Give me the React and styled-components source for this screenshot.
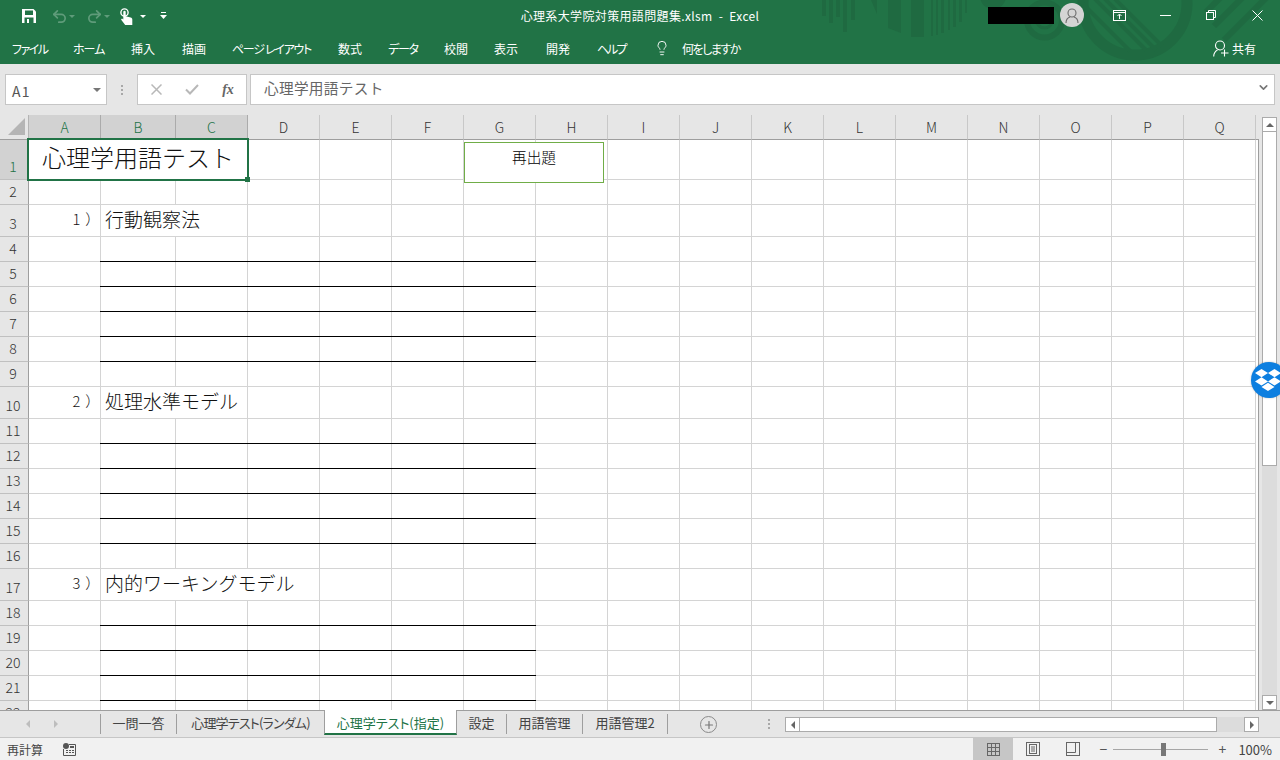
import React from "react";
import styled, { createGlobalStyle, css } from "styled-components";
import { Undo2, Redo2, Lightbulb, Plus, ChevronDown } from "lucide-react";
import { FaDropbox } from "react-icons/fa";

const FONT = `"Noto Sans CJK JP", "Noto Sans", sans-serif`;
const GREEN = "#217346";
const Global = createGlobalStyle`
  html, body { margin: 0; padding: 0; background: #e6e6e6; }
  body { font-family: ${FONT}; text-spacing-trim: space-all; }
  * { box-sizing: border-box; }
`;

const Window = styled.div`
  position: relative; width: 1280px; height: 760px; overflow: hidden;
  display: flex; flex-direction: column; background: #e6e6e6;
`;

/* ---------- header ---------- */
const Header = styled.header`
  position: relative; height: 64px; flex: none; background: ${GREEN}; color: #fff;
  font-feature-settings: "palt";
`;
const Pattern = styled.svg`position: absolute; inset: 0; width: 1280px; height: 64px;`;
const TitleBar = styled.div`
  position: relative; height: 32px; display: grid; grid-template-columns: 1fr auto 1fr; align-items: center;
`;
const Qat = styled.div`display: flex; align-items: center; padding-left: 22px; height: 32px;`;
const QatSlot = styled.span`
  display: flex; align-items: center; justify-content: center; flex: none;
  width: ${p => p.$w}px; margin-left: ${p => p.$ml || 0}px;
`;
const Title = styled.div`font-size: 12px; line-height: 32px; white-space: pre; letter-spacing: 0.36px;`;
const WinControls = styled.div`display: flex; align-items: center; justify-content: flex-end; height: 32px;`;
const Redacted = styled.div`width: 66px; height: 17px; background: #000; margin-right: 6px; margin-top: -1px;`;
const Avatar = styled.div`
  width: 24px; height: 24px; border-radius: 50%; background: #d4d4d4; margin-right: 12px; margin-top: -2px;
  display: flex; align-items: center; justify-content: center;
`;
const WinBtn = styled.div`
  width: 46px; height: 32px; display: flex; align-items: center; justify-content: center; margin-top: -2px;
`;
const RibbonTabs = styled.nav`
  position: relative; height: 32px; display: flex; align-items: center; padding-left: 12px; font-size: 12px;
`;
const RibbonTab = styled.span`
  flex: none; width: ${p => p.$w}px; white-space: nowrap; letter-spacing: ${p => p.$ls || 0}px;
`;
const Tell = styled.span`flex: none; display: flex; align-items: center; gap: 12px; margin-left: -7px; letter-spacing: -1.5px;`;
const Share = styled.span`
  margin-left: auto; margin-right: 24px; display: flex; align-items: center; gap: 3px;
`;

/* ---------- formula bar ---------- */
const FormulaBar = styled.div`
  height: 51px; flex: none; display: flex; align-items: flex-start; padding: 10px 5px 0; background: #e6e6e6;
`;
const NameBox = styled.div`
  width: 102px; height: 31px; background: #fff; border: 1px solid #c6c6c6; display: flex; align-items: center;
  justify-content: space-between; padding: 2px 5px 0 6px; font-size: 14px; color: #555; letter-spacing: 1.2px;
`;
const Caret = styled.span`
  width: 0; height: 0; border-left: 4px solid transparent; border-right: 4px solid transparent;
  border-top: 4px solid ${p => p.$c || "#777"}; margin-bottom: 2px;
`;
const Grip = styled.div`
  width: 30px; height: 31px; display: flex; flex-direction: column; align-items: center; justify-content: center; gap: 2px;
`;
const GripDot = styled.i`display: block; width: 2px; height: 2px; background: #a8a8a8;`;
const FxBox = styled.div`
  width: 110px; height: 31px; background: #fff; border: 1px solid #c6c6c6; display: flex; align-items: center;
  margin-right: 3px;
`;
const FxSlot = styled.span`
  width: 37px; display: flex; justify-content: center; align-items: center;
`;
const FxText = styled.span`
  font-family: "Liberation Serif", serif; font-style: italic; font-weight: 700; font-size: 14px; color: #666;
`;
const FormulaInput = styled.div`
  flex: 1; height: 31px; background: #fff; border: 1px solid #c6c6c6; display: flex; align-items: center;
  justify-content: space-between; padding: 0 4px 4px 13px; font-size: 14.67px; color: #666; letter-spacing: 0.3px;
`;

/* ---------- sheet ---------- */
const SheetRow = styled.div`height: 595px; flex: none; display: flex;`;
const SheetArea = styled.div`
  position: relative; width: 1259px; height: 595px; overflow: hidden; flex: none;
`;
const COLS = ["A","B","C","D","E","F","G","H","I","J","K","L","M","N","O","P","Q"];
const ROWS = [[1,40],[2,25],[3,32],[4,25],[5,25],[6,25],[7,25],[8,25],[9,25],[10,32],[11,25],[12,25],[13,25],[14,25],[15,25],[16,25],[17,32],[18,25],[19,25],[20,25],[21,25],[22,25]];
const Grid = styled.div`
  display: grid;
  grid-template-columns: 29px 72px 75px repeat(15, 72px) 3px;
  grid-template-rows: 25px ${ROWS.map(r => r[1] + "px").join(" ")};
`;
const Corner = styled.div`
  background: #e6e6e6; border-right: 1px solid #b4b4b4; border-bottom: 1px solid #9e9e9e;
  display: flex; align-items: flex-end; justify-content: flex-end; padding: 0 3px 4px 0;
`;
const CornerMark = styled.span`
  width: 0; height: 0; border-left: 17px solid transparent; border-bottom: 17px solid #b5b5b5;
`;
const ColHead = styled.div`
  background: ${p => (p.$sel ? "#d2d2d2" : "#e6e6e6")}; color: ${p => (p.$sel ? GREEN : "#333")};
  border-right: 1px solid ${p => (p.$sel ? "#ababab" : "#c8c8c8")}; border-bottom: 1px solid #9e9e9e;
  font-size: 14px; font-weight: 300; display: flex; align-items: center; justify-content: center; padding-bottom: 1px;
`;
const HeadEnd = styled.div`background: #e6e6e6; border-bottom: 1px solid #9e9e9e;`;
const RowHead = styled.div`
  background: ${p => (p.$sel ? "#d2d2d2" : "#e6e6e6")}; color: ${p => (p.$sel ? GREEN : "#333")};
  border-right: 1px solid #9e9e9e; border-bottom: 1px solid #c0c0c0;
  font-size: 14px; font-weight: 300; line-height: 24px; text-align: center; padding: 0 2px 1px 0;
  display: flex; align-items: flex-end; justify-content: center;
`;
const Cell = styled.div`
  position: relative; background: #fff; white-space: nowrap; color: #111;
  border-right: 1px solid #d4d4d4; border-bottom: 1px solid #d4d4d4;
  grid-column: span ${p => p.$span || 1};
  ${p => p.$rule && css`
    &::after {
      content: ""; position: absolute; left: -1px; right: -1px; bottom: -1px; height: 1px; background: #000;
    }
  `}
`;
const SheetTitle = styled(Cell)`
  display: flex; align-items: center; justify-content: center; font-size: 24px; font-weight: 300; padding-bottom: 6px;
`;
const NumCell = styled(Cell)`
  display: flex; align-items: center; justify-content: flex-end; font-size: 14.67px; font-weight: 300; padding-bottom: 4px;
`;
const NumText = styled.span`letter-spacing: 5px; margin-right: -5px;`;
const TextCell = styled(Cell)`
  display: flex; align-items: center; padding: 0 0 4px 4px; font-size: 19px; font-weight: 300;
`;
const CellEnd = styled.div`background: #fff; border-right: 1px solid #9e9e9e;`;
const Selection = styled.div`
  position: absolute; left: 27px; top: 23px; width: 222px; height: 43px; border: 2px solid ${GREEN};
`;
const FillHandle = styled.div`
  position: absolute; left: 245px; top: 62px; width: 5px; height: 5px; background: ${GREEN};
`;
const MacroButton = styled.div`
  position: absolute; left: 464px; top: 27px; width: 140px; height: 41px; background: #fff; border: 1px solid #70ad47;
  text-align: center; font-size: 14.67px; font-weight: 300; line-height: 20px; padding-top: 4px; color: #000;
`;

const VScroll = styled.div`
  width: 21px; flex: none; padding: 2px 3px 0; display: flex; flex-direction: column; background: #e6e6e6;
`;
const VTrack = styled.div`flex: 1; background: #dcdcdc;`;
const ScrollBtn = styled.div`
  flex: none; background: #fff; border: 1px solid #ababab; display: flex; align-items: center; justify-content: center;
  width: ${p => p.$w}px; height: ${p => p.$h}px;
`;
const Thumb = styled.div`
  flex: none; background: #fff; border: 1px solid #ababab; border-top: none;
  width: ${p => p.$w}px; height: ${p => p.$h}px;
`;
const ArrowUp = styled.span`
  width: 0; height: 0; border-left: 4px solid transparent; border-right: 4px solid transparent; border-bottom: 4px solid #666;
`;
const ArrowDown = styled.span`
  width: 0; height: 0; border-left: 4px solid transparent; border-right: 4px solid transparent; border-top: 4px solid #666;
`;
const ArrowSide = styled.span`
  width: 0; height: 0; border-top: 4px solid transparent; border-bottom: 4px solid transparent;
  ${p => p.$dir === "left"
    ? css`border-right: 4px solid ${p.$c || "#666"};`
    : css`border-left: 4px solid ${p.$c || "#666"};`}
`;
const Badge = styled.div`
  position: absolute; left: 1251px; top: 362px; width: 36px; height: 36px; border-radius: 50%; background: #0d7fe0;
  color: #fff; display: flex; align-items: center; justify-content: center; padding-right: 3px;
  box-shadow: 0 0 2px rgba(0,0,0,.25);
`;

/* ---------- tab strip ---------- */
const TabStrip = styled.div`
  height: 28px; flex: none; display: flex; align-items: flex-start; background: #e6e6e6; border-top: 1px solid #9e9e9e;
  border-bottom: 1px solid #c6c6c6; font-feature-settings: "palt"; font-size: 13px;
`;
const TabNav = styled.div`
  width: 100px; height: 26px; display: flex; align-items: center; padding-left: 26px; gap: 24px; flex: none;
`;
const Tab = styled.div`
  flex: none; width: ${p => p.$w}px; text-align: center; white-space: nowrap; color: #444;
  height: 20px; line-height: 18px; margin-top: 3px; letter-spacing: ${p => p.$ls || 0}px;
  border-left: ${p => (p.$bare ? "none" : "1px solid #9e9e9e")};
`;
const ActiveTab = styled.div`
  flex: none; width: ${p => p.$w}px; text-align: center; white-space: nowrap; color: ${GREEN};
  height: 25px; margin-top: -1px; padding-top: 4px; line-height: 18px; background: #fff;
  border-left: 1px solid #9e9e9e; border-right: 1px solid #9e9e9e; border-bottom: 2px solid ${GREEN};
`;
const TabEnd = styled.div`
  flex: none; width: 33px; height: 20px; margin-top: 3px; border-left: 1px solid #9e9e9e;
`;
const AddTab = styled.div`
  flex: none; width: 17px; height: 17px; margin-top: 5px; border-radius: 50%; border: 1px solid #8a8a8a; color: #777;
  display: flex; align-items: center; justify-content: center;
`;
const TabGrip = styled.div`
  flex: none; width: 2px; margin: 8px 0 0 51px; display: flex; flex-direction: column; gap: 2px;
`;
const HScroll = styled.div`
  flex: none; margin: 6px 0 0 15px; width: 474px; height: 15px; display: flex; background: #dcdcdc;
`;
const HThumb = styled.div`
  flex: none; width: 417px; height: 15px; background: #fff; border: 1px solid #ababab; border-left: none;
`;
const HTrack = styled.div`flex: 1;`;

/* ---------- status bar ---------- */
const StatusBar = styled.footer`
  height: 22px; flex: none; background: #f1f1f1; display: flex; align-items: center; font-size: 12px; color: #444;
`;
const StatusText = styled.span`margin-left: 7px; width: 56px;`;
const ViewBtn = styled.div`
  width: 40px; height: 22px; display: flex; align-items: center; justify-content: center; flex: none;
  background: ${p => (p.$on ? "#c6c6c6" : "transparent")};
`;
const StatusRight = styled.div`margin-left: auto; display: flex; align-items: center; height: 22px;`;
const ZoomSign = styled.span`
  flex: none; width: ${p => p.$w}px; text-align: center; font-size: 14px; color: #555; line-height: 22px;
`;
const Slider = styled.div`
  position: relative; width: 95px; height: 1px; background: #a6a6a6; flex: none;
`;
const SliderKnob = styled.span`
  position: absolute; left: 48px; top: -6px; width: 5px; height: 13px; background: #777;
`;
const ZoomValue = styled.span`margin: 0 8px 0 2px; font-size: 13px;`;

/* ---------- icons ---------- */
const SaveIcon = () => (
  <svg width="14" height="14" viewBox="0 0 14 14">
    <path fill="#fff" d="M0 0h11.5L14 2.5V14H0z" />
    <rect x="3" y="1.5" width="8" height="4.5" fill={GREEN} />
    <rect x="2.5" y="8.5" width="9" height="5.5" fill={GREEN} />
    <rect x="5" y="10" width="2" height="4" fill="#fff" />
  </svg>
);
const TouchIcon = () => (
  <svg width="13" height="17" viewBox="0 0 13 17">
    <circle cx="4.5" cy="4.5" r="3.6" fill="none" stroke="#fff" strokeWidth="1.4" />
    <path fill="#fff" d="M3.3 4a1.2 1.2 0 0 1 2.4 0v4.2l5 1.3c1 .3 1.6 1 1.6 2V17H5.2L1 11.5l1-1 1.3 1z" />
  </svg>
);
const MiniCaret = ({ c }) => <Caret $c={c} style={{ borderWidth: "3px 3px 0", margin: 0 }} />;
const CustomizeIcon = () => (
  <svg width="7" height="8" viewBox="0 0 7 8"><rect x="1" y="0" width="5" height="1" fill="#fff" /><path d="M0 3h7L3.5 7z" fill="#fff" /></svg>
);
const PersonIcon = () => (
  <svg width="16" height="17" viewBox="0 0 16 17" fill="none" stroke="#6b6b6b" strokeWidth="1.1">
    <circle cx="8" cy="6" r="4" /><path d="M2 16c0-4 2.5-5.5 4-6M14 16c0-4-2.5-5.5-4-6" />
  </svg>
);
const RibbonOptionsIcon = () => (
  <svg width="13" height="11" viewBox="0 0 13 11" fill="none" stroke="#fff">
    <rect x=".5" y=".5" width="12" height="10" /><path d="M.5 2.5h12M6.5 9V4.5M4.5 6l2-2 2 2" />
  </svg>
);
const MinIcon = () => <svg width="11" height="1"><rect width="11" height="1" fill="#fff" /></svg>;
const RestoreIcon = () => (
  <svg width="10" height="10" viewBox="0 0 10 10" fill="none" stroke="#fff">
    <rect x=".5" y="2.5" width="7" height="7" /><path d="M2.5 2.5v-2h7v7h-2" />
  </svg>
);
const CloseIcon = ({ c = "#fff", s = 11, w = 1 }) => (
  <svg width={s} height={s} viewBox="0 0 11 11" fill="none" stroke={c} strokeWidth={w}><path d="M.5.5l10 10M10.5.5l-10 10" /></svg>
);
const CheckIcon = () => (
  <svg width="14" height="11" viewBox="0 0 14 11" fill="none" stroke="#b8b8b8" strokeWidth="2"><path d="M1 5.5l4 4 8-8.5" /></svg>
);
const ShareIcon = () => (
  <svg width="16" height="17" viewBox="0 0 16 17" fill="none" stroke="#fff" strokeWidth="1.1">
    <circle cx="7" cy="5.5" r="4.5" /><path d="M.7 16.5c0-3.5 2-5.5 3.8-6.5" /><path d="M11.5 9.5v7M8 13h7.5" />
  </svg>
);
const MacroIcon = () => (
  <svg width="13" height="13" viewBox="0 0 13 13">
    <circle cx="3" cy="3" r="3" fill="#555" />
    <path fill="none" stroke="#555" d="M6 1.5h6.5v11H.5V6" />
    <path stroke="#555" strokeDasharray="2 1" d="M3 7.5h8M3 9.5h8" />
    <rect x="7" y="3" width="4" height="2" fill="#555" />
  </svg>
);
const NormalIcon = () => (
  <svg width="13" height="13" viewBox="0 0 13 13" fill="none" stroke="#666">
    <rect x=".5" y=".5" width="12" height="12" /><path d="M4.5 0v13M8.5 0v13M0 4.5h13M0 8.5h13" />
  </svg>
);
const LayoutIcon = () => (
  <svg width="14" height="14" viewBox="0 0 14 14" fill="none" stroke="#666">
    <rect x=".5" y=".5" width="13" height="13" /><rect x="3.5" y="2.5" width="7" height="9" /><path d="M5 5h4M5 7h4M5 9h4" />
  </svg>
);
const BreakIcon = () => (
  <svg width="14" height="14" viewBox="0 0 14 14" fill="none" stroke="#666">
    <rect x=".5" y=".5" width="13" height="13" /><path d="M.5 10.5h9v-10" />
  </svg>
);
const DropboxBadge = () => <FaDropbox size={26} />;

const UNDERLINED = new Set([4,5,6,7,8,11,12,13,14,15,18,19,20,21]);
const QUESTIONS = {
  3: { num: "1）", text: "行動観察法", span: 2 },
  10: { num: "2）", text: "処理水準モデル", span: 2 },
  17: { num: "3）", text: "内的ワーキングモデル", span: 3 },
};
const RIBBON = [["ファイル",61,-1.5],["ホーム",58,-1],["挿入",51],["描画",50],["ページ レイアウト",106,-1.3],["数式",50],["データ",56,-1.2],["校閲",50],["表示",52],["開発",51],["ヘルプ",64,-2]];

function rowCells(n) {
  const out = [];
  const q = QUESTIONS[n];
  let start = 0;
  if (n === 1) {
    out.push(<SheetTitle key="t" $span={3}>心理学用語テスト</SheetTitle>);
    start = 3;
  } else if (q) {
    out.push(<NumCell key="n"><NumText>{q.num}</NumText></NumCell>);
    out.push(<TextCell key="q" $span={q.span}>{q.text}</TextCell>);
    start = 1 + q.span;
  }
  for (let i = start; i < COLS.length; i++) {
    out.push(<Cell key={i} $rule={UNDERLINED.has(n) && i >= 1 && i <= 6} />);
  }
  out.push(<CellEnd key="end" />);
  return out;
}

export default function App() {
  return (
    <Window>
      <Global />
      <Header>
        <Pattern viewBox="0 0 1280 64" fill="#1f6a41">
          <rect x="822" width="4" height="16" /><rect x="829" width="4" height="23" />
          <rect x="836" width="4" height="17" /><rect x="843" width="4" height="32" />
          <rect x="851" width="4" height="20" />
          <polygon points="871,0 877,0 877,14" />
          <polygon points="888,0 901,0 901,33 888,28" />
          <rect x="911" width="13" height="37" />
          <rect x="931" width="2" height="36" /><rect x="936" width="2" height="35" />
          <rect x="941" width="3" height="33" /><rect x="948" width="2" height="30" />
          <rect x="953" width="3" height="27" /><rect x="959" width="3" height="22" />
          <rect x="965" width="2" height="13" />
          <circle cx="993" cy="-4" r="13" />
          <g fill="none" stroke="#1f6a41">
            <circle cx="1044.5" cy="20" r="17.5" strokeWidth="6" />
            <circle cx="1044.5" cy="20" r="8" strokeWidth="3" />
            <circle cx="1135" cy="3" r="52" strokeWidth="11" />
            <path strokeWidth="4" d="M1092 -4L1146 50M1102 -4L1156 50M1112 -4L1162 46M1083 4L1130 51" />
            <path strokeWidth="6" d="M1206 12L1230 -12M1214 26L1252 -12M1224 40L1278 -14" />
          </g>
        </Pattern>
        <TitleBar>
          <Qat>
            <SaveIcon />
            <QatSlot $w={18} $ml={14}><Undo2 size={17} strokeWidth={2.4} color="#5f9b7a" /></QatSlot>
            <QatSlot $w={6} $ml={1}><MiniCaret c="#5f9b7a" /></QatSlot>
            <QatSlot $w={18} $ml={10}><Redo2 size={17} strokeWidth={2.4} color="#5f9b7a" /></QatSlot>
            <QatSlot $w={6} $ml={1}><MiniCaret c="#5f9b7a" /></QatSlot>
            <QatSlot $w={13} $ml={10}><TouchIcon /></QatSlot>
            <QatSlot $w={6} $ml={7}><MiniCaret c="#fff" /></QatSlot>
            <QatSlot $w={7} $ml={14}><CustomizeIcon /></QatSlot>
          </Qat>
          <Title>{"心理系大学院対策用語問題集.xlsm  -  Excel"}</Title>
          <WinControls>
            <Redacted />
            <Avatar><PersonIcon /></Avatar>
            <WinBtn><RibbonOptionsIcon /></WinBtn>
            <WinBtn><MinIcon /></WinBtn>
            <WinBtn><RestoreIcon /></WinBtn>
            <WinBtn><CloseIcon /></WinBtn>
          </WinControls>
        </TitleBar>
        <RibbonTabs>
          {RIBBON.map(([t, w, ls]) => <RibbonTab key={t} $w={w} $ls={ls}>{t}</RibbonTab>)}
          <Tell><Lightbulb size={16} strokeWidth={1.4} color="#fff" />何をしますか</Tell>
          <Share><ShareIcon />共有</Share>
        </RibbonTabs>
      </Header>

      <FormulaBar>
        <NameBox>A1<Caret /></NameBox>
        <Grip><GripDot /><GripDot /><GripDot /></Grip>
        <FxBox>
          <FxSlot><CloseIcon c="#b8b8b8" s={11} w={1.5} /></FxSlot>
          <FxSlot><CheckIcon /></FxSlot>
          <FxSlot><FxText>fx</FxText></FxSlot>
        </FxBox>
        <FormulaInput>
          心理学用語テスト
          <ChevronDown size={13} strokeWidth={3} color="#777" />
        </FormulaInput>
      </FormulaBar>

      <SheetRow>
        <SheetArea>
          <Grid>
            <Corner><CornerMark /></Corner>
            {COLS.map((c, i) => <ColHead key={c} $sel={i < 3}>{c}</ColHead>)}
            <HeadEnd />
            {ROWS.map(([n]) => (
              <React.Fragment key={n}>
                <RowHead $sel={n === 1}>{n}</RowHead>
                {rowCells(n)}
              </React.Fragment>
            ))}
          </Grid>
          <Selection />
          <FillHandle />
          <MacroButton>再出題</MacroButton>
        </SheetArea>
        <VScroll>
          <ScrollBtn $w={15} $h={15}><ArrowUp /></ScrollBtn>
          <Thumb $w={15} $h={334} />
          <VTrack />
          <ScrollBtn $w={15} $h={15}><ArrowDown /></ScrollBtn>
        </VScroll>
      </SheetRow>

      <TabStrip>
        <TabNav><ArrowSide $dir="left" $c="#bdbdbd" /><ArrowSide $c="#bdbdbd" /></TabNav>
        <Tab $w={76}>一問一答</Tab>
        <Tab $w={148} $ls={-0.8}>心理学テスト(ランダム)</Tab>
        <ActiveTab $w={133}>心理学テスト(指定)</ActiveTab>
        <Tab $w={49} $bare>設定</Tab>
        <Tab $w={76}>用語管理</Tab>
        <Tab $w={85}>用語管理2</Tab>
        <TabEnd />
        <AddTab><Plus size={12} strokeWidth={2.4} /></AddTab>
        <TabGrip><GripDot /><GripDot /><GripDot /></TabGrip>
        <HScroll>
          <ScrollBtn $w={15} $h={15}><ArrowSide $dir="left" /></ScrollBtn>
          <HThumb />
          <HTrack />
          <ScrollBtn $w={15} $h={15}><ArrowSide /></ScrollBtn>
        </HScroll>
      </TabStrip>

      <StatusBar>
        <StatusText>再計算</StatusText>
        <MacroIcon />
        <StatusRight>
          <ViewBtn $on><NormalIcon /></ViewBtn>
          <ViewBtn><LayoutIcon /></ViewBtn>
          <ViewBtn><BreakIcon /></ViewBtn>
          <ZoomSign $w={20}>−</ZoomSign>
          <Slider><SliderKnob /></Slider>
          <ZoomSign $w={28}>+</ZoomSign>
          <ZoomValue>100%</ZoomValue>
        </StatusRight>
      </StatusBar>

      <Badge><DropboxBadge /></Badge>
    </Window>
  );
}
